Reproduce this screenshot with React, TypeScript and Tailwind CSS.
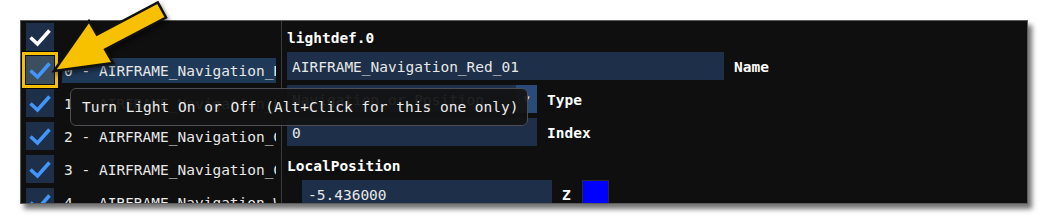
import React from 'react';

const rows = [
  '0 - AIRFRAME_Navigation_Red_01',
  '1 - AIRFRAME_Navigation_Red_02',
  '2 - AIRFRAME_Navigation_Green_01',
  '3 - AIRFRAME_Navigation_Green_02',
  '4 - AIRFRAME_Navigation_White_01',
];

const Check: React.FC<{ color: string }> = ({ color }) => (
  <svg width="28" height="28" viewBox="0 0 28 28">
    <path d="M4.5 14.5 L11.5 21 L23.5 7.5" fill="none" stroke={color} strokeWidth="3.6" strokeLinejoin="miter" />
  </svg>
);

const Checkbox: React.FC<{ color: string; hovered?: boolean }> = ({ color, hovered }) => (
  <div className={`w-7 h-7 shrink-0 ${hovered ? 'bg-[#3b4f61]' : 'bg-[#1d2f49]'}`}>
    <Check color={color} />
  </div>
);

export default function App() {
  return (
    <div className="relative w-[1048px] h-[224px] bg-white overflow-hidden font-['DejaVu_Sans_Mono',monospace] text-[14.5px]">
      <div className="ml-[20px] mt-[20px] w-[1008px] h-[184px] bg-[#0f0f0f] border border-[#5c5c5c] shadow-[4px_5px_5px_rgba(0,0,0,0.55)] overflow-hidden flex">
        {/* light list */}
        <div className="w-[260px] shrink-0 overflow-hidden pl-[5px] pt-[2px] flex flex-col gap-[5px]">
          <div className="flex items-center h-7">
            <Checkbox color="#ffffff" />
          </div>
          {rows.map((r, i) => (
            <div key={r} className="flex items-center h-7">
              <Checkbox color="#4296fa" hovered={i === 0} />
              <div
                className={`ml-[8px] w-[214px] h-[25px] leading-[27px] pl-[2px] whitespace-nowrap overflow-hidden text-[#e8e8e8] ${
                  i === 0 ? 'bg-[#1f3958]' : ''
                }`}
              >
                {r}
              </div>
            </div>
          ))}
        </div>

        <div className="w-px shrink-0 bg-[#3a3b40]" />

        {/* properties */}
        <div className="flex-1 pl-[5px] pt-[7px] flex flex-col text-[#e8e8e8]">
          <div className="h-5 leading-5 font-bold text-white">lightdef.0</div>

          <div className="mt-[4px] flex h-7 leading-[31px]">
            <div className="w-[437px] h-7 pl-[5px] bg-[#1d2f49]">AIRFRAME_Navigation_Red_01</div>
            <span className="ml-[10px] font-bold text-white">Name</span>
          </div>

          <div className="mt-[5px] flex h-7 leading-[31px]">
            <div className="w-[250px] h-7 flex bg-[#1d2f49]">
              <div className="flex-1 pl-[5px] whitespace-nowrap overflow-hidden">Navigation or Position</div>
              <div className="w-[21px] h-7 bg-[#2a4b78] flex items-center justify-center text-[10px] leading-none text-[#e8e8e8]">▼</div>
            </div>
            <span className="ml-[10px] font-bold text-white">Type</span>
          </div>

          <div className="mt-[5px] flex h-7 leading-[31px]">
            <div className="w-[250px] h-7 pl-[5px] bg-[#1d2f49]">0</div>
            <span className="ml-[10px] font-bold text-white">Index</span>
          </div>

          <div className="mt-[10px] h-5 leading-5 font-bold text-white">LocalPosition</div>

          <div className="mt-[4px] pl-[15px] flex h-7 leading-[31px]">
            <div className="w-[250px] h-7 pl-[6px] bg-[#1d2f49]">-5.436000</div>
            <span className="ml-[10px] font-bold text-white">Z</span>
            <div className="ml-[11px] w-[27px] h-7 bg-[#0000ff] border border-[#2c2c34]" />
          </div>
        </div>
      </div>

      {/* tooltip */}
      <div className="absolute left-[70px] top-[88px] w-[458px] h-[38px] rounded-[6px] border border-[#4d4d53] bg-[rgba(18,18,18,0.93)] pl-[11px] pt-[2px] flex items-center text-[#ececec] whitespace-nowrap">
        Turn Light On or Off (Alt+Click for this one only)
      </div>

      {/* highlight box */}
      <div className="absolute left-[22px] top-[52px] w-[36px] h-[36px] border-[3px] border-[#f5c000] shadow-[0_0_0_1px_rgba(0,0,0,0.7)]" />

      {/* pointer arrow */}
      <svg
        className="absolute left-0 top-0 drop-shadow-[2px_3px_2px_rgba(0,0,0,0.45)]"
        width="200"
        height="100"
        viewBox="0 0 200 100"
      >
        <polygon
          points="54,71 113,63 105.1,49.5 166,17.5 157.8,2.5 96.9,34.5 89,21"
          fill="#f8c100"
          stroke="#111111"
          strokeWidth="2.5"
          strokeLinejoin="miter"
        />
      </svg>
    </div>
  );
}
